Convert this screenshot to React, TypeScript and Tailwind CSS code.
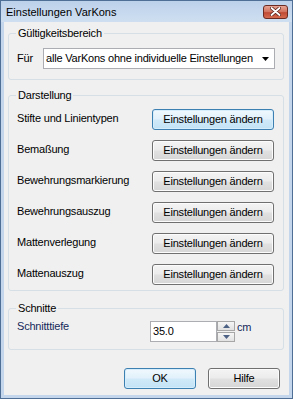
import type React from "react"

function Btn({ label, active, className = "" }: { label: string; active?: boolean; className?: string }) {
  return (
    <button
      className={`h-[21px] rounded-[3px] border text-[11px] leading-none text-black ${
        active
          ? "border-[#3c7fb1] bg-[linear-gradient(#f0f8fd,#e2f1fb_45%,#cfe9f8_55%,#c2e3f6)] shadow-[inset_0_0_0_1px_#d6eefb]"
          : "border-[#707070] bg-[linear-gradient(#f4f4f4,#ececec_45%,#e0e0e0_55%,#d6d6d6)] shadow-[inset_0_0_0_1px_#fcfcfc]"
      } ${className}`}
    >
      {label}
    </button>
  )
}

function Group({ title, className = "", children }: { title: string; className?: string; children: React.ReactNode }) {
  return (
    <fieldset className={`ml-[4px] mr-[5px] rounded-[3px] border border-[#d5dfe5] pl-[8px] ${className}`}>
      <legend className="ml-[-1px] px-[2px] leading-[13px]">{title}</legend>
      {children}
    </fieldset>
  )
}

const rows = [
  "Stifte und Linientypen",
  "Bemaßung",
  "Bewehrungsmarkierung",
  "Bewehrungsauszug",
  "Mattenverlegung",
  "Mattenauszug",
]

export default function App() {
  return (
    <div className="flex h-[399px] w-[293px] flex-col border border-[#4f6f96] bg-[#c3d6ec] font-['Liberation_Sans',Arial,sans-serif] text-[11px] tracking-[-0.2px] text-black">
      {/* title bar */}
      <div className="flex h-[21px] shrink-0 items-center bg-[linear-gradient(#bcd1ea,#cfdff1)] pl-[5px] pr-[4px]">
        <span className="pt-[2px] leading-[13px] tracking-normal text-black">Einstellungen VarKons</span>
        <span className="ml-auto flex h-[14px] w-[25px] items-center justify-center rounded-[3px] border border-[#6b2a22] bg-[linear-gradient(#e8a493,#d0705c_50%,#c04a34_55%,#d46a4f)]">
          <svg width="11" height="9" viewBox="0 0 11 9">
            <path d="M1.5 1 L9.5 8 M9.5 1 L1.5 8" stroke="#5a2018" strokeWidth="3.4" strokeLinecap="round" />
            <path d="M1.5 1 L9.5 8 M9.5 1 L1.5 8" stroke="#ffffff" strokeWidth="1.8" strokeLinecap="round" />
          </svg>
        </span>
      </div>

      {/* frame + client */}
      <div className="flex flex-1 px-[3px] pb-[3px]">
        <div className="flex flex-1 flex-col bg-[#f0f0f0]">
          <Group title="Gültigkeitsbereich" className="mt-[5px] pr-[8px] pt-[8px] pb-[10px]">
            <div className="flex items-center">
              <span>Für</span>
              <div className="ml-auto flex h-[21px] w-[232px] items-center whitespace-nowrap border border-[#abadb3] bg-white pl-[2px] pr-[5px]">
                <span>alle VarKons ohne individuelle Einstellungen</span>
                <svg className="ml-auto shrink-0" width="7" height="4" viewBox="0 0 7 4">
                  <path d="M0 0 H7 L3.5 4 Z" fill="#000" />
                </svg>
              </div>
            </div>
          </Group>

          <Group title="Darstellung" className="mt-[9px] pr-[9px] pt-[7px] pb-[5px]">
            <div className="flex flex-col gap-[10px]">
              {rows.map((r, i) => (
                <div key={r} className="flex items-center">
                  <span className="-mt-[2px]">{r}</span>
                  <Btn label="Einstellungen ändern" active={i === 0} className="ml-auto w-[122px]" />
                </div>
              ))}
            </div>
          </Group>

          <Group title="Schnitte" className="mt-[11px] pr-[9px] pt-[3px] pb-[7px]">
            <div className="flex items-start">
              <span className="w-[133px] text-[#14285a]">Schnitttiefe</span>
              <div className="mt-[3px] flex h-[21px] w-[67px] items-center border border-[#abadb3] bg-white pl-[2px]">35.0</div>
              <div className="mt-[3px] flex h-[21px] w-[18px] flex-col justify-between">
                {[0, 1].map((k) => (
                  <span
                    key={k}
                    className="flex h-[10px] items-center justify-center border border-[#a7a7a7] bg-[linear-gradient(#f6f6f6,#e2e2e2)]"
                  >
                    <svg width="7" height="4" viewBox="0 0 7 4">
                      <path d={k === 0 ? "M0 4 H7 L3.5 0 Z" : "M0 0 H7 L3.5 4 Z"} fill="#4d6185" />
                    </svg>
                  </span>
                ))}
              </div>
              <span className="ml-[2px] mt-[1px] text-[#14285a]">cm</span>
            </div>
          </Group>

          <div className="mt-[18px] flex justify-end gap-[12px] pr-[9px]">
            <Btn label="OK" active className="w-[72px]" />
            <Btn label="Hilfe" className="w-[72px]" />
          </div>
        </div>
      </div>
    </div>
  )
}
